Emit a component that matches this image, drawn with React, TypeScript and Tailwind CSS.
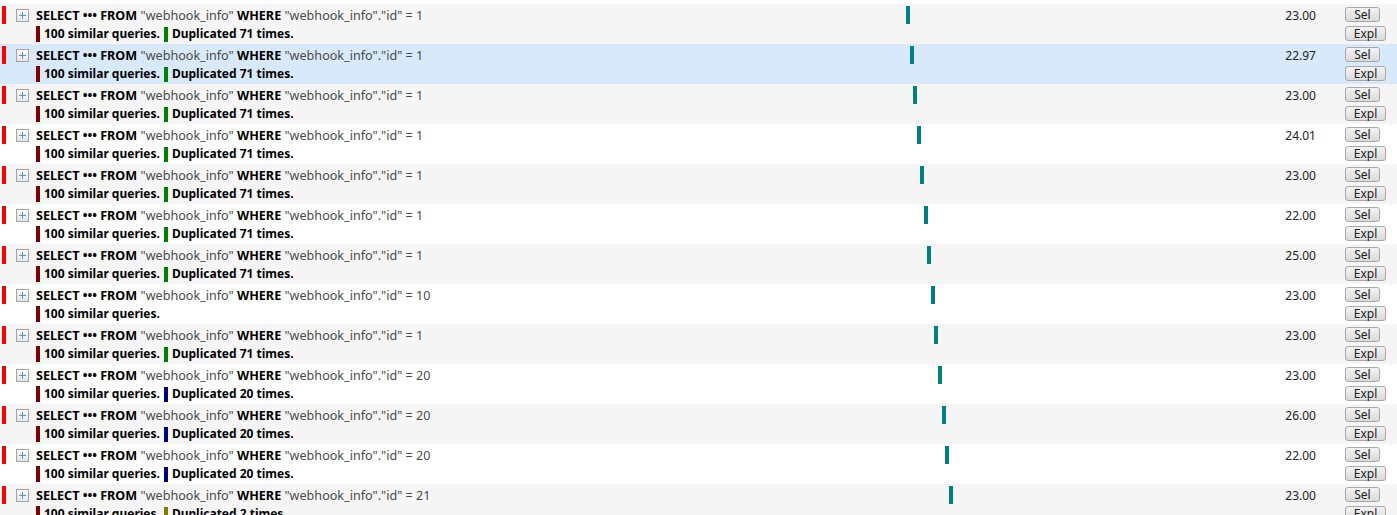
import React from "react";

type Query = {
    id: number;
    time: string;
    dup?: number;
    dupColor?: string;
};

const queries: Query[] = [
    { id: 1, time: "23.00", dup: 71, dupColor: "bg-[#008000]" },
    { id: 1, time: "22.97", dup: 71, dupColor: "bg-[#008000]" },
    { id: 1, time: "23.00", dup: 71, dupColor: "bg-[#008000]" },
    { id: 1, time: "24.01", dup: 71, dupColor: "bg-[#008000]" },
    { id: 1, time: "23.00", dup: 71, dupColor: "bg-[#008000]" },
    { id: 1, time: "22.00", dup: 71, dupColor: "bg-[#008000]" },
    { id: 1, time: "25.00", dup: 71, dupColor: "bg-[#008000]" },
    { id: 10, time: "23.00" },
    { id: 1, time: "23.00", dup: 71, dupColor: "bg-[#008000]" },
    { id: 20, time: "23.00", dup: 20, dupColor: "bg-[#000080]" },
    { id: 20, time: "26.00", dup: 20, dupColor: "bg-[#000080]" },
    { id: 20, time: "22.00", dup: 20, dupColor: "bg-[#000080]" },
    { id: 21, time: "23.00", dup: 2, dupColor: "bg-[#808000]" },
]

function ToggleButton() {
    return (
        <button className="w-[13px] h-[13px] border border-[#a3a3a3] bg-gradient-to-b from-white to-[#e6e6e6] flex items-center justify-center p-0">
            <svg width="9" height="9" viewBox="0 0 9 9">
                <path d="M4.5 1v7M1 4.5h7" stroke="#5b8ee6" strokeWidth="1" />
            </svg>
        </button>
    )
}

function SmallButton({ label, width }: { label: string; width: string }) {
    return (
        <button className={`${width} h-[15px] rounded-[3px] border border-[#a8a8a8] bg-gradient-to-b from-[#f4f4f4] to-[#dadada] text-[12px] leading-[13px] text-[#222] flex items-center justify-center`}>
            {label}
        </button>
    )
}

function Row({ q, index }: { q: Query; index: number }) {
    const bg = index === 1 ? "bg-[#d8e9fb]" : index % 2 === 0 ? "bg-[#f5f5f5]" : "bg-white"

    return (
        <div className={`flex h-[40px] ${bg}`}>
            <div className="w-[16px] shrink-0 pl-[2px] pt-[2px]">
                <div className="w-[4px] h-[18px] bg-[#ff0000]" />
            </div>

            <div className="w-[20px] shrink-0 pt-[5px]">
                <ToggleButton />
            </div>

            <div className="w-[864px] shrink-0 pt-[3px] leading-[18px] text-[#4a4a4a] whitespace-nowrap">
                <div className="text-[12.6px]">
                    <strong className="text-black">SELECT ••• FROM</strong> "webhook_info" <strong className="text-black">WHERE</strong> "webhook_info"."id" = {q.id}
                </div>
                <div className="flex items-center text-[12px] font-bold text-black">
                    <span className="inline-block w-[4px] h-[16px] bg-[#800000] mr-[4px]" />
                    <span>100 similar queries.</span>
                    {q.dup && (
                        <>
                            <span className={`inline-block w-[4px] h-[15px] ${q.dupColor} ml-[4px] mr-[4px]`} />
                            <span>Duplicated {q.dup} times.</span>
                        </>
                    )}
                </div>
            </div>

            <div className="w-[350px] shrink-0 pt-[2px]">
                <div className="w-[4px] h-[18px] bg-[#008080]" style={{ marginLeft: 6 + index * 3.55 }} />
            </div>

            <div className="w-[66px] shrink-0 pt-[3px] text-right text-[12px] leading-[18px] text-[#222]">
                {q.time}
            </div>

            <div className="ml-[29px] pt-[3px] flex flex-col gap-[4px]">
                <SmallButton label="Sel" width="w-[35px]" />
                <SmallButton label="Expl" width="w-[41px]" />
            </div>
        </div>
    )
}

export default function App() {
    return (
        <div className="bg-white min-h-screen w-[1397px] h-[515px] overflow-hidden pt-[4px] font-['Noto_Sans','Open_Sans',sans-serif]">
            {queries.map((q, i) => (
                <Row key={i} q={q} index={i} />
            ))}
        </div>
    )
}
